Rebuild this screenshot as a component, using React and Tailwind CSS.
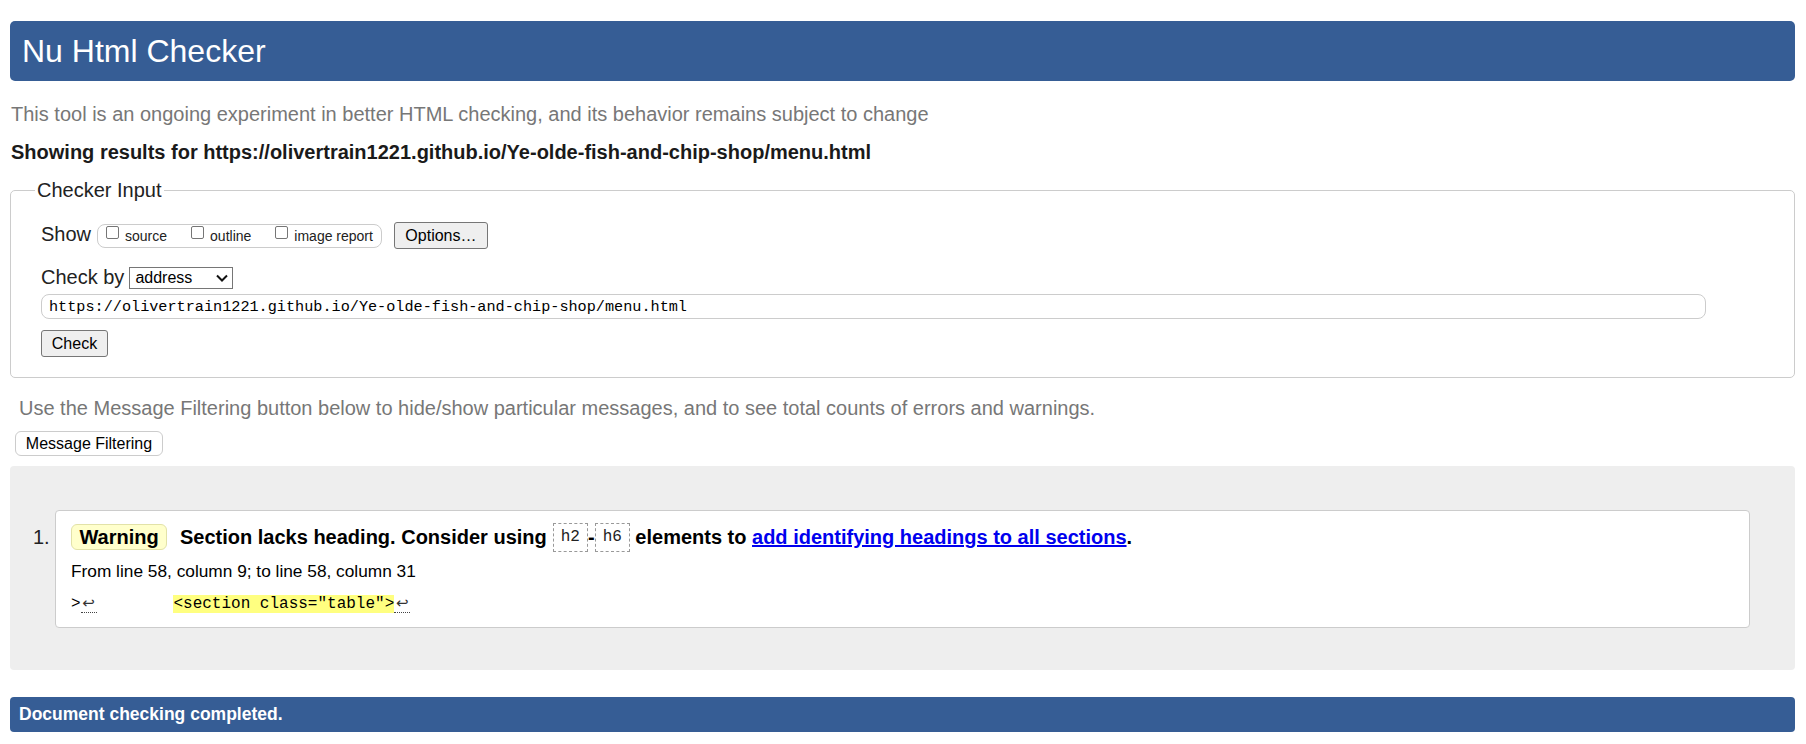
function Box({ label, first }) {
  return (
    <label className={`flex items-start ${first ? '' : 'ml-[24px]'}`}>
      <span className="mt-[1px] h-[13px] w-[13px] rounded-[2px] border border-[#767676] bg-white" />
      <span className="ml-[6px]">{label}</span>
    </label>
  );
}

function Tag({ children }) {
  return (
    <code className="flex h-[29px] items-center border border-dashed border-[#999] bg-white px-[7px] font-['Liberation_Mono',monospace] text-[16px] font-normal text-[#222]">
      {children}
    </code>
  );
}

function Lf() {
  return (
    <span className="inline-block w-[16px] border-b border-dotted border-[#444] text-center font-['DejaVu_Sans',sans-serif] text-[15px] leading-[17px] text-[#333]">↩</span>
  );
}

export default function App() {
  return (
    <div className="min-h-screen bg-white pl-[10px] pr-[11px] pt-[21px] font-['Liberation_Sans',Arial,sans-serif] text-[20px] text-[#222]">
      <header className="flex h-[60px] items-center rounded-[5px] bg-[#365d95] pl-[12px]">
        <h1 className="text-[32px] font-normal leading-normal text-white">Nu Html Checker</h1>
      </header>

      <p className="ml-[1px] mt-[21px] leading-[24px] text-[#777]">
        This tool is an ongoing experiment in better HTML checking, and its behavior remains subject to change
      </p>
      <p className="ml-[1px] mt-[14px] font-bold leading-[24px] text-[#1a1a1a]">
        Showing results for https://olivertrain1221.github.io/Ye-olde-fish-and-chip-shop/menu.html
      </p>

      <fieldset className="mt-[14px] rounded-[5px] border border-[#ccc] pb-[20px] pl-[24px] pt-[20px]">
        <legend className="px-[2px] leading-[24px]">Checker Input</legend>
        <div className="pl-[6px]">
          <div className="flex items-start">
            <span className="leading-[24px]">Show</span>
            <div className="ml-[6px] mt-[2px] flex h-[24px] items-start rounded-[8px] border border-[#ccc] pl-[8px] pr-[8px] text-[14px] leading-[22px]">
              <Box label="source" first />
              <Box label="outline" />
              <Box label="image report" />
            </div>
            <button className="ml-[12px] h-[27px] w-[94px] rounded-[3px] border border-[#767676] bg-[#efefef] text-[16px] leading-none text-black">
              Options…
            </button>
          </div>

          <div className="mt-[16px] flex items-start">
            <span className="leading-[24px]">Check by</span>
            <div className="ml-[5px] mt-[2px] flex h-[22px] w-[104px] items-center justify-between border border-[#767676] bg-white pl-[5px] pr-[4px] text-[16px] text-black">
              <span>address</span>
              <svg width="12" height="8" viewBox="0 0 12 8" fill="none">
                <path d="M1 1.5 6 6.5 11 1.5" stroke="#111" strokeWidth="2" />
              </svg>
            </div>
          </div>

          <div className="mt-[5px] h-[25px] w-[1665px] rounded-[8px] border border-[#ccc] pl-[7px] pt-[2px] font-['Liberation_Mono',monospace] text-[15.2px] leading-[21px] text-black">
            https://olivertrain1221.github.io/Ye-olde-fish-and-chip-shop/menu.html
          </div>

          <button className="mt-[11px] block h-[27px] w-[67px] rounded-[3px] border border-[#767676] bg-[#efefef] text-[16px] leading-none text-black">
            Check
          </button>
        </div>
      </fieldset>

      <p className="ml-[9px] mt-[18px] leading-[24px] text-[#777]">
        Use the Message Filtering button below to hide/show particular messages, and to see total counts of errors and warnings.
      </p>
      <button className="ml-[5px] mt-[11px] block h-[25px] w-[148px] rounded-[6px] border border-[#ccc] bg-white text-[16px] leading-none text-black">
        Message Filtering
      </button>

      <div className="mt-[10px] flex rounded-[4px] bg-[#eee] pb-[42px] pl-[23px] pr-[45px] pt-[44px]">
        <span className="mt-[15px] w-[22px] leading-[24px]">1.</span>
        <div className="flex-1 rounded-[4px] border border-[#ccc] bg-white pb-[13px] pl-[15px] pt-[11px]">
          <div className="flex h-[30px] items-center font-bold leading-[24px] text-black">
            <span className="flex h-[26px] w-[96px] items-center justify-center rounded-[6px] border border-[#e2e2a8] bg-[#ffffcc]">
              Warning
            </span>
            <span className="ml-[13px]">Section lacks heading. Consider using</span>
            <span className="ml-[6px]"><Tag>h2</Tag></span>
            <span>-</span>
            <Tag>h6</Tag>
            <span className="ml-[5.5px] whitespace-pre">
              elements to <a href="#" className="text-[#0000ee] underline">add identifying headings to all sections</a>.
            </span>
          </div>
          <div className="mt-[9px] text-[17.3px] leading-[20px] text-black">
            From line 58, column 9; to line 58, column 31
          </div>
          <div className="mt-[13px] whitespace-pre font-['Liberation_Mono',monospace] text-[16px] leading-[20px] text-black">
            {'>'}<Lf />{'        '}<span className="bg-[#ffff80]">{'<section class="table">'}</span><Lf />
          </div>
        </div>
      </div>

      <div className="mt-[27px] flex h-[35px] items-center rounded-[4px] bg-[#365d95] pl-[9px] text-[17.5px] font-bold text-white">
        Document checking completed.
      </div>
    </div>
  );
}
